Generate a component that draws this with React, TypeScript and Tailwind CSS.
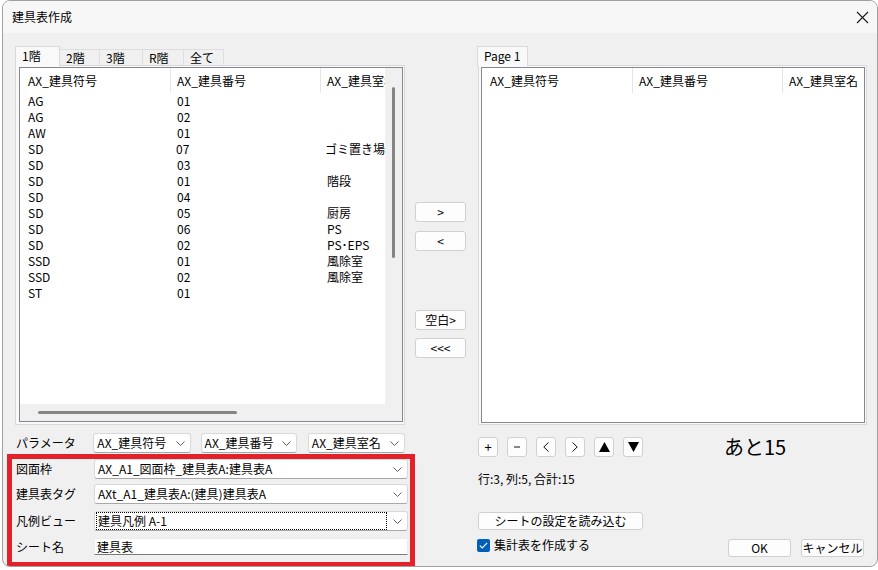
import clsx from "clsx";

const floorRows = [
  ["AG", "01", ""],
  ["AG", "02", ""],
  ["AW", "01", ""],
  ["SD", "07", "ゴミ置き場"],
  ["SD", "03", ""],
  ["SD", "01", "階段"],
  ["SD", "04", ""],
  ["SD", "05", "厨房"],
  ["SD", "06", "PS"],
  ["SD", "02", "PS･EPS"],
  ["SSD", "01", "風除室"],
  ["SSD", "02", "風除室"],
  ["ST", "01", ""],
];

const floorTabs = ["2階", "3階", "R階", "全て"];
const tabWidths = ["w-[40px]", "w-[43px]", "w-[41px]", "w-[40px]"];

function Chevron() {
  return (
    <svg width="9" height="5" viewBox="0 0 9 5" className="shrink-0">
      <polyline points="0.5,0.5 4.5,4.5 8.5,0.5" fill="none" stroke="#5f5f5f" strokeWidth="1" />
    </svg>
  );
}

function Select({ value, className, focused }: { value: string; className?: string; focused?: boolean }) {
  return (
    <div
      className={clsx(
        "flex h-[20px] items-center rounded-[3px] border border-[#d9d9d9] border-b-[#a8a8a8] bg-white pr-[5px]",
        className,
      )}
    >
      {focused ? (
        <span className="mr-[6px] ml-[1px] flex h-[18px] flex-1 items-center border border-dotted border-black pl-[1px]">
          {value}
        </span>
      ) : (
        <span className="flex-1 truncate pl-[3px]">{value}</span>
      )}
      <Chevron />
    </div>
  );
}

function Button({ children, className }: { children: React.ReactNode; className?: string }) {
  return (
    <div
      className={clsx(
        "flex items-center justify-center rounded-[3px] border border-[#d0d0d0] bg-[#fdfdfd]",
        className,
      )}
    >
      {children}
    </div>
  );
}

function ListHeader({ third }: { third: string }) {
  return (
    <div className="flex h-[25px] shrink-0 items-center whitespace-nowrap">
      <div className="flex h-full w-[150px] items-center pl-[8px]">AX_建具符号</div>
      <div className="flex h-full w-[150px] items-center border-l border-[#e5e5e5] pl-[6px]">AX_建具番号</div>
      <div className="flex h-full flex-1 items-center overflow-hidden border-l border-[#e5e5e5] pl-[6px]">
        {third}
      </div>
    </div>
  );
}

export default function App() {
  return (
    <div className="h-[570px] w-[878px] overflow-hidden bg-white font-['Noto_Sans_CJK_JP',sans-serif] text-[12px] leading-[16px] text-black">
      <div className="ml-[2px] flex h-[567px] w-[876px] flex-col overflow-hidden rounded-[8px] border border-[#a0a0a0] bg-[#f0f0f0]">
        {/* Title bar */}
        <div className="flex h-[32px] shrink-0 items-center justify-between bg-[#f7f7f7] pr-[8px] pl-[9px]">
          <span>建具表作成</span>
          <svg width="13" height="13" viewBox="0 0 13 13">
            <path d="M1 1 L12 12 M12 1 L1 12" stroke="#1a1a1a" strokeWidth="1.1" />
          </svg>
        </div>

        {/* Body */}
        <div className="flex flex-1 pt-[13px] pl-[12px]">
          {/* Left column */}
          <div className="flex w-[390px] flex-col">
            <div className="flex h-[20px] items-end">
              <div className="relative z-10 h-[20px] w-[45px] border border-b-0 border-[#d9d9d9] bg-[#f9f9f9] pt-[1px] pl-[6px]">
                1階
              </div>
              {floorTabs.map((t, i) => (
                <div
                  key={t}
                  className={clsx(
                    "h-[17px] border-t border-r border-[#dedede] bg-[#f0f0f0] pl-[6px] leading-[16px]",
                    tabWidths[i],
                  )}
                >
                  {t}
                </div>
              ))}
            </div>
            <div className="-mt-[1px] h-[360px] border border-[#d9d9d9] bg-[#f9f9f9] pt-[1px] pr-[1px] pb-[2px] pl-[3px]">
              <div className="flex h-full border border-[#828790] bg-white">
                <div className="flex w-[365px] flex-col">
                  <ListHeader third="AX_建具室名" />
                  <div className="flex-1">
                    {floorRows.map((r, i) => (
                      <div key={i} className="flex h-[16px] items-center whitespace-nowrap">
                        <div className="w-[150px] pl-[8px]">{r[0]}</div>
                        <div className="w-[150px] pl-[7px]">{r[1]}</div>
                        <div className="flex-1 pl-[7px]">{r[2]}</div>
                      </div>
                    ))}
                  </div>
                  <div className="h-[17px] shrink-0 bg-[#f0f0f0] pt-[7px] pl-[18px]">
                    <div className="h-[3px] w-[199px] rounded-full bg-[#858585]" />
                  </div>
                </div>
                <div className="w-[17px] bg-[#f0f0f0] pt-[19px]">
                  <div className="mx-auto h-[171px] w-[3px] rounded-full bg-[#858585]" />
                </div>
              </div>
            </div>

            {/* Parameter row */}
            <div className="mt-[8px] flex h-[20px] items-center">
              <div className="w-[79px] pl-[1px]">パラメータ</div>
              <Select value="AX_建具符号" className="w-[98px]" />
              <Select value="AX_建具番号" className="ml-[10px] w-[97px]" />
              <Select value="AX_建具室名" className="ml-[11px] w-[98px]" />
            </div>

            {/* Highlighted settings */}
            <div className="mt-[1px] -ml-[8px] flex h-[113px] w-[408px] flex-col border-[5px] border-[#e3212a]">
              <div className="flex h-[20px] items-center">
                <div className="w-[82px] pl-[4px]">図面枠</div>
                <Select value="AX_A1_図面枠_建具表A:建具表A" className="mr-[2px] flex-1" />
              </div>
              <div className="mt-[5px] flex h-[20px] items-center">
                <div className="w-[82px] pl-[4px]">建具表タグ</div>
                <Select value="AXt_A1_建具表A:(建具)建具表A" className="mr-[2px] flex-1" />
              </div>
              <div className="mt-[7px] flex h-[20px] items-center">
                <div className="w-[82px] pl-[4px]">凡例ビュー</div>
                <Select value="建具凡例 A-1" className="mr-[2px] flex-1" focused />
              </div>
              <div className="mt-[7px] flex h-[17px] items-center">
                <div className="w-[82px] pl-[4px]">シート名</div>
                <div className="mr-[2px] flex h-[17px] flex-1 items-center border border-[#ececec] border-b-[#7a7a7a] bg-white pl-[2px]">
                  建具表
                </div>
              </div>
            </div>
          </div>

          {/* Middle buttons */}
          <div className="ml-[10px] flex w-[51px] flex-col">
            <Button className="mt-[156px] h-[20px]">&gt;</Button>
            <Button className="mt-[9px] h-[20px]">&lt;</Button>
            <Button className="mt-[59px] h-[20px]">空白&gt;</Button>
            <Button className="mt-[8px] h-[20px]">&lt;&lt;&lt;</Button>
          </div>

          {/* Right column */}
          <div className="ml-[11px] flex w-[390px] flex-col">
            <div className="flex h-[20px] items-end">
              <div className="relative z-10 h-[20px] w-[51px] border border-b-0 border-[#d9d9d9] bg-[#f9f9f9] pt-[1px] pl-[6px]">
                Page 1
              </div>
            </div>
            <div className="-mt-[1px] ml-[1px] h-[360px] w-[389px] border border-[#d9d9d9] bg-[#f9f9f9] pt-[1px] pr-[1px] pb-[1px] pl-[2px]">
              <div className="flex h-full flex-col border border-[#828790] bg-white">
                <ListHeader third="AX_建具室名" />
              </div>
            </div>

            <div className="mt-[12px] ml-[1px] flex h-[20px] items-center">
              <Button className="h-[20px] w-[20px] text-[13px]">+</Button>
              <Button className="ml-[9px] h-[20px] w-[20px]">
                <svg width="8" height="2" viewBox="0 0 8 2">
                  <rect x="1" y="0.5" width="6" height="1" fill="#111" />
                </svg>
              </Button>
              <Button className="ml-[9px] h-[20px] w-[20px]">
                <svg width="6" height="10" viewBox="0 0 6 10">
                  <polyline points="5.5,0.5 0.8,5 5.5,9.5" fill="none" stroke="#111" strokeWidth="1" />
                </svg>
              </Button>
              <Button className="ml-[9px] h-[20px] w-[20px]">
                <svg width="6" height="10" viewBox="0 0 6 10">
                  <polyline points="0.5,0.5 5.2,5 0.5,9.5" fill="none" stroke="#111" strokeWidth="1" />
                </svg>
              </Button>
              <Button className="ml-[9px] h-[20px] w-[20px]">
                <svg width="11" height="10" viewBox="0 0 11 10">
                  <polygon points="5.5,0 11,10 0,10" fill="#000" />
                </svg>
              </Button>
              <Button className="ml-[9px] h-[20px] w-[20px]">
                <svg width="11" height="10" viewBox="0 0 11 10">
                  <polygon points="0,0 11,0 5.5,10" fill="#000" />
                </svg>
              </Button>
              <span className="ml-[81px] text-[20px] leading-[24px]">あと15</span>
            </div>

            <div className="mt-[14px] ml-[1px] h-[16px]">行:3, 列:5, 合計:15</div>

            <Button className="mt-[25px] ml-[1px] h-[18px] w-[165px]">シートの設定を読み込む</Button>

            <div className="mt-[8px] flex h-[19px] items-start">
              <div className="flex items-center">
                <div className="flex h-[13px] w-[13px] items-center justify-center rounded-[2px] bg-[#005fb8]">
                  <svg width="9" height="7" viewBox="0 0 9 7">
                    <polyline points="0.8,3.6 3.2,6 8.2,0.8" fill="none" stroke="#fff" strokeWidth="1.1" />
                  </svg>
                </div>
                <span className="ml-[4px] -mt-[1px]">集計表を作成する</span>
              </div>
              <div className="mt-[1px] ml-auto mr-[3px] flex">
                <Button className="h-[18px] w-[63px] border-[#0067c0]">OK</Button>
                <Button className="ml-[10px] h-[18px] w-[63px]">キャンセル</Button>
              </div>
            </div>
          </div>
        </div>
      </div>
    </div>
  );
}
